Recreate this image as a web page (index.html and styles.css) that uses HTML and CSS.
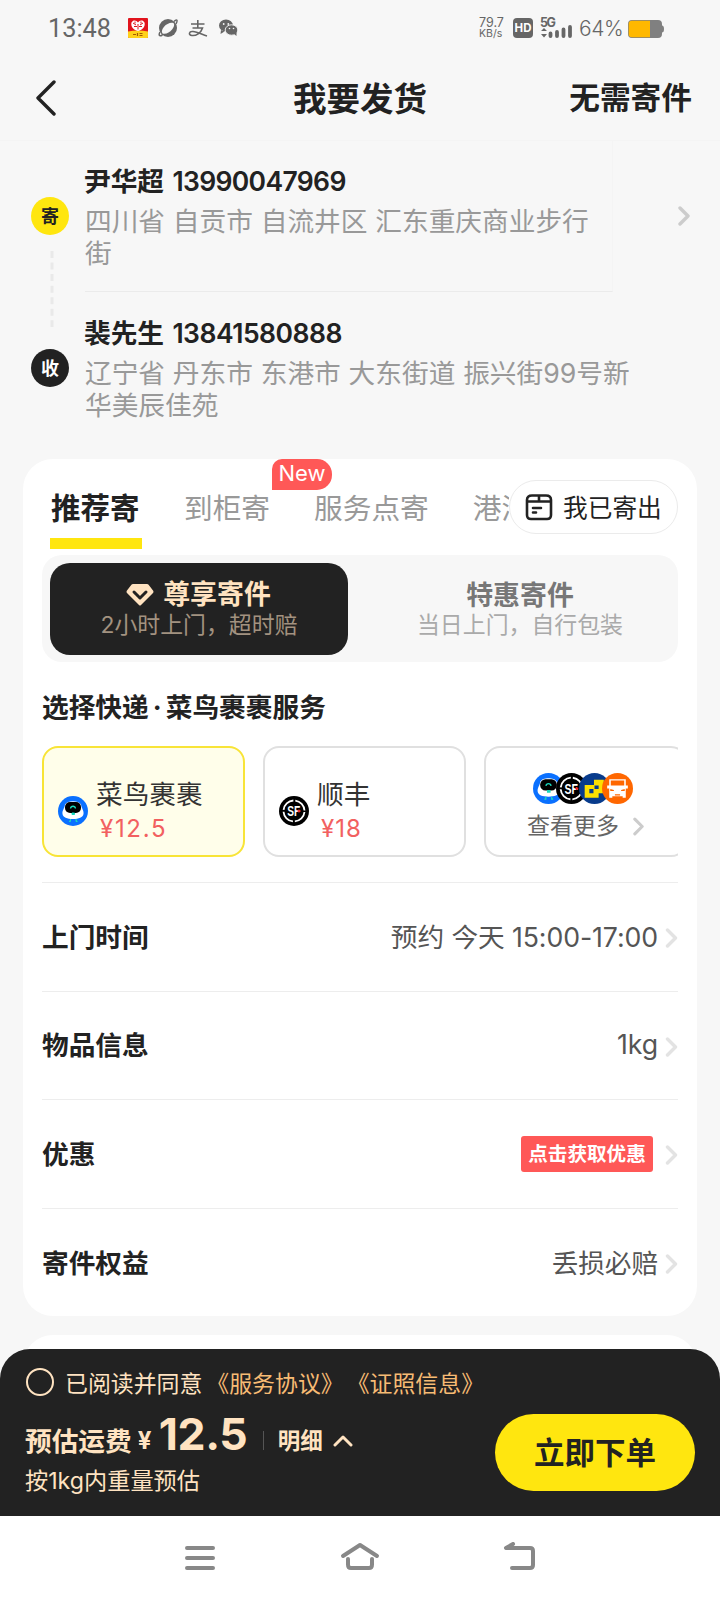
FILE: index.html
```html
<!DOCTYPE html>
<html lang="zh-CN">
<head>
<meta charset="utf-8">
<title>我要发货</title>
<link rel="stylesheet" href="styles.css">
</head>
<body>
<svg class="defs" width="0" height="0" aria-hidden="true">
  <symbol id="chevron" viewBox="0 0 12 20"><path d="M2 2 10 10l-8 8" fill="none" stroke="currentColor" stroke-width="3.400" stroke-linecap="round" stroke-linejoin="round"/></symbol>
  <symbol id="cainiao" viewBox="0 0 30 30">
    <circle cx="15" cy="15" r="15" fill="#0a70ff"/>
    <path d="M7 8.500C9 4 21 4 23 8.500c.6 4 3 6 2.500 9.500-.6 3.500-4.500 5-10.500 5S5 21.500 4.500 18C4 14.500 6.500 12.500 7 8.500z" fill="#fff"/>
    <rect x="7" y="6" width="16" height="11" rx="5" fill="#000"/>
    <path d="M12.500 12.500c.5-3 4.500-3 5 0" fill="none" stroke="#19d9bd" stroke-width="1.300"/>
    <path d="M14 17h2.500v1.500H14zM12.500 23v2.500H11M18 23v2.500h1.500" fill="#19d9bd" stroke="#19d9bd" stroke-width="1"/>
  </symbol>
  <symbol id="sf" viewBox="0 0 30 30">
    <circle cx="15" cy="15" r="15" fill="#000"/>
    <circle cx="15" cy="15" r="10.500" fill="none" stroke="#fff" stroke-width="1.800" stroke-dasharray="14.500 2" stroke-dashoffset="-1"/>
    <text x="8.200" y="20" font-family="Liberation Sans" font-size="14" font-weight="700" fill="#fff" textLength="13" lengthAdjust="spacingAndGlyphs">SF</text>
    <path d="M18.500 15h3M20 13.500v3" stroke="#e22" stroke-width="1.300"/>
  </symbol>
</svg>
<div class="screen">
  <div class="status">
    <span class="clock">13:48</span>
    <div class="apps">
      <svg width="20" height="20" viewBox="0 0 20 20"><rect width="20" height="20" rx="1" fill="#e1141d"/><path d="M0 13.500q10-2 20 0V19a1 1 0 0 1-1 1H1a1 1 0 0 1-1-1z" fill="#ffd11a"/><path d="M10 13C5 12 2.500 8 3.500 4.500 5 1.500 8.500 2 10 4.500c1.500-2.500 5-3 6.500 0C17.500 8 15 12 10 13z" fill="#fff"/><path d="M5 5l3 2M6 8.500h3M15 5l-3 2M14 8.500h-3M10 6v5.500M7 3.500v2M13 3.500v2" stroke="#e1141d" stroke-width="1"/><path d="M5 16.500h3M9.500 15v3M11.500 15.500h3M11.500 17.500h3" stroke="#a35b00" stroke-width="1.200"/></svg>
      <svg width="20" height="20" viewBox="0 0 20 20"><circle cx="10" cy="10" r="9" fill="#666"/><path d="M4.500 15.500C1.500 11 10 3 15.500 5c3 3.500-5 12.500-11 10.500z" fill="#f7f7f7"/><path d="M4.500 17C1 19 .5 17 2 14M16 3.500C19 .5 20 2 18 6" fill="none" stroke="#666" stroke-width="1.500"/></svg>
      <svg width="20" height="20" viewBox="0 0 20 20"><path d="M3 6h13.500M9.800 2v8.500M4.500 10h10C13 15 8 18 4 17.500c-4-.5-3-4.500 1-4 4.500.5 9 3 14 4.500" fill="none" stroke="#666" stroke-width="1.600"/></svg>
      <svg width="20" height="20" viewBox="0 0 20 20"><ellipse cx="8" cy="7.500" rx="7" ry="6" fill="#666"/><path d="M3 12l-.5 4 4-2.500z" fill="#666"/><ellipse cx="13.500" cy="12" rx="6.300" ry="5.200" fill="#666" stroke="#f7f7f7" stroke-width=".9"/><path d="M16 16l2.500 2v-4z" fill="#666"/><g fill="#f7f7f7"><circle cx="5.700" cy="6" r=".9"/><circle cx="10.300" cy="6" r=".9"/><circle cx="11.500" cy="10.500" r=".8"/><circle cx="15.500" cy="10.500" r=".8"/></g></svg>
    </div>
    <div class="speed"><span>79.7</span><small>KB/s</small></div>
    <span class="hd">HD</span>
    <svg class="signal" width="34" height="22" viewBox="0 0 34 22"><text x="0" y="10" font-family="Inter" font-weight="700" font-size="12.500" fill="#666" textLength="16">5G</text><path d="M1 14l3-3 3 3zM1 17h6l-3 3.500z" fill="#666"/><path d="M10.500 16.500v2.500M17 15v4M23.500 12.500V19M30 10v9" stroke="#666" stroke-width="3.800" stroke-linecap="round"/></svg>
    <span class="percent">64%</span>
    <svg class="battery" width="36" height="18" viewBox="0 0 36 18"><path d="M4 0h26q4 0 4 4v1.500q2 0 2 3.500t-2 3.500V14q0 4-4 4H4q-4 0-4-4V4q0-4 4-4z" fill="#808080"/><path d="M4 .7h18v16.600H4Q.7 17.300.7 14V4Q.7.700 4 .700z" fill="#ffb800"/></svg>
  </div>

  <header class="titlebar">
    <svg class="back" width="20" height="36" viewBox="0 0 20 36"><path d="M18 2 2 18l16 16" fill="none" stroke="#222" stroke-width="3.400" stroke-linecap="round" stroke-linejoin="round"/></svg>
    <h1>我要发货</h1>
    <span class="noneed">无需寄件</span>
  </header>

  <section class="addresses">
    <div class="route">
      <span class="dot send">寄</span>
      <svg width="4" height="80" viewBox="0 0 4 80"><path d="M2 2v76" stroke="#e9e9e9" stroke-width="3" stroke-dasharray="7 4.550"/></svg>
      <span class="dot recv">收</span>
    </div>
    <div class="people">
      <div class="person sender">
        <div class="name">尹华超 <b>13990047969</b></div>
        <p>四川省 自贡市 自流井区 汇东重庆商业步行<br>街</p>
      </div>
      <div class="person">
        <div class="name">裴先生 <b class="tight">13841580888</b></div>
        <p>辽宁省 丹东市 东港市 大东街道 振兴街99号新<br>华美辰佳苑</p>
      </div>
    </div>
    <svg class="go" width="12" height="20"><use href="#chevron"/></svg>
  </section>

  <main class="card">
    <nav class="tabs">
      <div class="tablist">
        <span class="tab active">推荐寄</span>
        <span class="tab">到柜寄<i class="new">New</i></span>
        <span class="tab">服务点寄</span>
        <span class="tab">港澳台</span>
      </div>
      <div class="sent">
        <svg width="28" height="28" viewBox="0 0 28 28" fill="none" stroke="#222" stroke-width="2.600" stroke-linecap="round" stroke-linejoin="round"><path d="M2 8.500V7q0-4.500 5-4.500h14q5 0 5 4.500v15q0 4-4 4H6q-4 0-4-4zM2 8.500h24M14 2.500v5.500M8 15h8M8 19.500h3"/></svg>
        <span>我已寄出</span>
      </div>
    </nav>
    <div class="segment">
      <div class="option on">
        <div class="otitle"><svg width="28" height="24" viewBox="0 0 28 24"><path d="M7 1h14q1 0 1.600.8l4.600 6q.8 1.200-.2 2.200L15 22q-1 1-2 0L1 10Q0 9 .800 7.800l4.600-6Q6 1 7 1z" fill="#ffe3c1"/><path d="m8 9 6 6 6-6" fill="none" stroke="#222" stroke-width="3" stroke-linecap="round" stroke-linejoin="round"/></svg>尊享寄件</div>
        <div class="osub">2小时上门，超时赔</div>
      </div>
      <div class="option">
        <div class="otitle">特惠寄件</div>
        <div class="osub">当日上门，自行包装</div>
      </div>
    </div>
    <h2>选择快递<span class="mid">·</span>菜鸟裹裹服务</h2>
    <div class="carriers">
      <div class="carrier chosen">
        <svg width="30" height="30"><use href="#cainiao"/></svg>
        <div><div class="cname">菜鸟裹裹</div><div class="price">¥12.5</div></div>
      </div>
      <div class="carrier">
        <svg width="30" height="30"><use href="#sf"/></svg>
        <div><div class="cname">顺丰</div><div class="price close">¥18</div></div>
      </div>
      <div class="carrier more">
        <div class="stack">
          <svg width="31" height="31"><use href="#cainiao"/></svg>
          <svg width="31" height="31"><use href="#sf"/></svg>
          <svg width="31" height="31" viewBox="0 0 30 30"><circle cx="15" cy="15" r="15" fill="#083b8c"/><path d="M14.500 6.500H24v13h-5V24H5.500V11.500h9zM10 15.500v4h4v-4zM15 12v3.500h4V12z" fill="#fde000" fill-rule="evenodd"/></svg>
          <svg width="31" height="31" viewBox="0 0 30 30"><circle cx="15" cy="15" r="15" fill="#ff6700"/><path d="M7 6h16v6h2v3h-2v9h-3v-1.500H10V24H7v-9H5v-3h2z" fill="#fff"/><path d="M8.500 7.200h13v5h-13zM8 15.500l3.500 1v1H8zM22 15.500l-3.500 1v1H22zM12.500 20.500h5v1.300h-5z" fill="#ff6700"/></svg>
        </div>
        <div class="morelink">查看更多<svg width="11" height="19"><use href="#chevron"/></svg></div>
      </div>
    </div>
    <div class="rows">
      <div class="row"><strong>上门时间</strong><span>预约 今天 15:00-17:00</span><svg width="13" height="20"><use href="#chevron"/></svg></div>
      <div class="row"><strong>物品信息</strong><span>1kg</span><svg width="13" height="20"><use href="#chevron"/></svg></div>
      <div class="row"><strong>优惠</strong><em>点击获取优惠</em><svg width="13" height="20"><use href="#chevron"/></svg></div>
      <div class="row"><strong>寄件权益</strong><span>丢损必赔</span><svg width="13" height="20"><use href="#chevron"/></svg></div>
    </div>
  </main>
  <div class="card next"></div>

  <footer class="dock">
    <div class="order">
      <div class="agree"><i class="check"></i><span>已阅读并同意</span><a>《服务协议》</a><a class="second">《证照信息》</a></div>
      <div class="pay">
        <div class="cost">
          <div class="total"><strong>预估运费</strong><span class="yen">¥</span><span class="amount">12.5</span><i class="bar"></i><span class="detail">明细</span><svg width="20" height="12" viewBox="0 0 20 12"><path d="m2 10 8-8 8 8" fill="none" stroke="#ffe3c1" stroke-width="3" stroke-linecap="round" stroke-linejoin="round"/></svg></div>
          <div class="basis">按1kg内重量预估</div>
        </div>
        <button class="submit">立即下单</button>
      </div>
    </div>
    <div class="sysnav">
      <svg width="32" height="32" viewBox="0 0 32 32"><path d="M3 6h26M3 16h26M3 26h26"/></svg>
      <svg width="40" height="32" viewBox="0 0 40 32"><path d="M3 14 20 3l17 11M8 17v5.500Q8 26 11 26h18q3 0 3-3.500V17"/></svg>
      <svg width="34" height="32" viewBox="0 0 34 32"><path d="M10 2 3 6H27q3 0 3 3v14q0 3-3 3H9"/></svg>
    </div>
  </footer>
</div>
</body>
</html>
```
FILE: styles.css
```css
* { box-sizing: border-box; margin: 0; padding: 0; }
body { background: #f7f7f7; font-family: Inter, "Noto Sans CJK SC", sans-serif; color: #222; }
svg { display: block; flex: none; }
i, em { font-style: normal; }
.defs { position: absolute; }
.screen { position: relative; width: 720px; height: 1600px; overflow: hidden; white-space: nowrap; }

.status { display: flex; align-items: center; height: 56px; padding: 0 56px 0 48px; color: #666; }
.clock { font: 25.300px/56px Roboto, sans-serif; width: 80px; padding-top: 1px; }
.apps { display: flex; gap: 10px; }
.speed { margin-left: auto; width: 34px; }
.speed span { display: block; font-size: 12.500px; line-height: 11px; }
.speed small { display: block; font-size: 10.500px; line-height: 11px; }
.hd { width: 20px; height: 20px; border-radius: 4px; background: #666; color: #fff; font-size: 11.500px; font-weight: 700; line-height: 20px; text-align: center; margin-right: 7px; }
.signal { margin-right: 5px; overflow: visible; }
.percent { font: 300 21px/56px Inter, sans-serif; width: 49px; letter-spacing: -.4px; padding-top: 1px; }
.battery { margin-top: 2px; }

.titlebar { display: flex; align-items: center; height: 84px; padding: 0 28px 0 36px; }
h1 { font-size: 33.500px; font-weight: 700; line-height: 84px; margin-left: 237px; padding-top: 2px; }
.noneed { margin: -5px 0 0 auto; font-size: 30.700px; font-weight: 700; }

.addresses { display: flex; height: 319px; padding-right: 30px; border-top: 1px solid #f4f4f4; }
.route { width: 85px; display: flex; flex-direction: column; align-items: center; padding: 56px 0 0 15px; }
.route svg { margin: 14px 0 20px 4px; }
.dot { width: 38px; height: 38px; border-radius: 50%; font-size: 18px; font-weight: 700; line-height: 39px; text-align: center; }
.send { background: #ffe60f; }
.recv { background: #222; color: #fff; }
.people { padding-left: 0; }
.person { height: 152px; padding-top: 20px; }
.sender { width: 528px; height: 151px; border-right: 1px solid #f4f4f4; border-bottom: 1px solid #ebebeb; }
.sender + .person { padding-top: 21px; }
.name { font-size: 26.700px; line-height: 40px; font-weight: 700; text-indent: -1px; }
.name b { font-weight: 600; font-size: 26.500px; letter-spacing: -.65px; margin-left: 2px; }
.name .tight { letter-spacing: -.5px; }
.person p { font-size: 26.700px; line-height: 32px; color: #999; padding-top: 4px; word-spacing: .3px; }
.go { margin: 65px 0 0 auto; color: #ccc; }

.card { width: 674px; margin: 0 23px; background: #fff; border-radius: 30px; height: 857px; padding: 0 19px; }
.next { margin-top: 19px; height: 60px; }
.tabs { display: flex; justify-content: space-between; height: 96px; }
.tablist { width: 467px; display: flex; overflow: hidden; padding-left: 8px; }
.tab { position: relative; flex: none; font-size: 28.700px; line-height: 99px; color: #999; margin-right: 44px; }
.tab.active { width: 92px; margin-right: 42px; color: #222; font-weight: 700; font-size: 29.500px; line-height: 98px; padding-left: 1px; }
.tab.active::after { content: ""; position: absolute; left: 0; top: 79px; width: 92px; height: 11px; background: #ffe60f; }
.new { position: absolute; left: 88px; top: 0; width: 60px; height: 31px; border-radius: 10px 15px 15px 0; background: #ff5857; color: #fff; font-size: 22px; line-height: 29px; text-align: center; }
.sent { width: 169px; height: 54px; margin: 21px 0 0; border: 1px solid #ebebeb; border-radius: 27px; display: flex; align-items: center; gap: 10px; padding-left: 15px; font-size: 24.700px; }
.sent span { margin-top: -2px; }

.segment { display: flex; height: 107px; border-radius: 20px; background: #f7f7f7; padding: 8px 8px 7px; }
.option { flex: 1; border-radius: 20px; padding-top: 15px; text-align: center; }
.option:not(.on) { padding-left: 22px; }
.on { flex: 0 0 298px; background: #222; }
.otitle { display: flex; justify-content: center; gap: 9px; align-items: center; font-size: 26.900px; line-height: 33px; font-weight: 700; color: #777; }
.option:not(.on) .otitle { padding-top: 1px; margin-bottom: -2px; }
.on .otitle { color: #ffe3c1; margin-bottom: -1px; padding-right: 1px; }
.osub { font-size: 22.900px; line-height: 30px; color: #aaa; }
.on .osub { color: #a29280; }

h2 { font-size: 26.700px; line-height: 40px; font-weight: 700; padding-top: 25px; height: 84px; }
.mid { display: inline-block; width: 17px; text-align: center; }
.carriers { display: flex; gap: 18px; overflow: hidden; height: 111px; }
.carrier { flex: 0 0 203px; height: 111px; border: 2px solid #e0e0e0; border-radius: 16px; display: flex; gap: 9px; padding: 28px 0 0 14px; }
.carrier > svg { margin-top: 20px; }
.chosen { border-color: #f8e437; background: #fffeea; }
.cname { font-size: 26.700px; line-height: 36px; color: #333; margin-left: -1px; }
.price { font-size: 24px; line-height: 33px; color: #f26060; letter-spacing: 1.700px; padding-left: 3px; }
.close { letter-spacing: 1px; }
.more { flex-direction: column; gap: 0; padding: 25px 0 0 41px; }
.stack { display: flex; padding-left: 6px; }
.stack svg { margin: 0 -8px 0 0; }
.morelink { display: flex; align-items: center; gap: 14px; font-size: 23px; line-height: 44px; color: #666; }
.morelink svg { color: #ccc; }

.rows { margin-top: 25px; }
.row { height: 108.600px; border-top: 1px solid #ededed; display: flex; align-items: center; font-size: 26.700px; }
.row strong { margin: -3px auto 0 0; }
.row span { color: #555; letter-spacing: -.1px; margin-top: -2px; }
.row svg { margin: 3px 0 0 7px; color: #e3e3e3; }
.row em { width: 132px; height: 36px; border-radius: 3px; background: #ff5857; color: #fff; font-size: 19.600px; font-weight: 700; line-height: 37px; text-align: center; margin: 1px 5px 0 0; }

.dock { position: absolute; left: 0; right: 0; bottom: 0; }
.order { height: 167px; border-radius: 30px 30px 0 0; background: #222; color: #ffe3c1; padding: 16px 25px 0; }
.agree { display: flex; align-items: center; height: 33px; font-size: 22.900px; }
.check { width: 28px; height: 28px; border: 2px solid #ffe3c1; border-radius: 50%; margin: 0 11px 0 1px; }
.agree a { color: #f7bb74; margin-left: 4px; }
.agree .second { margin-left: 3px; }
.pay { display: flex; justify-content: space-between; }
.total { display: flex; height: 62px; align-items: center; padding-top: 23px; }
.total strong { font-size: 26.700px; line-height: 40px; }
.yen { font-size: 24px; font-weight: 700; margin-left: 6px; width: 20px; }
.amount { font-size: 44.500px; font-weight: 700; letter-spacing: -.4px; margin: -13px 0 0 1px; width: 104px; }
.bar { width: 1px; height: 19px; background: #555; margin-right: 14px; }
.detail { font-size: 22.500px; font-weight: 700; margin: -4px 10px 0 0; }
.basis { font-size: 23.200px; line-height: 34px; padding-top: 4px; }
.submit { width: 200px; height: 77px; margin-top: 16px; padding-bottom: 3px; border: 0; border-radius: 39px; background: #ffe60f; color: #222; font: 700 30.500px Inter, "Noto Sans CJK SC", sans-serif; }
.sysnav { height: 84px; background: #fff; display: flex; justify-content: space-between; padding: 26px 183px 0 184px; }
.sysnav svg { fill: none; stroke: #888; stroke-width: 4px; stroke-linecap: round; stroke-linejoin: round; }
```
